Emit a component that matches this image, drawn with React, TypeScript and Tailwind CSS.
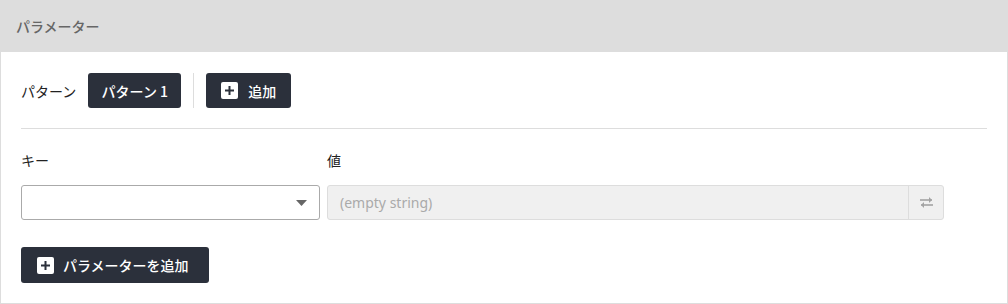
import React from 'react';

const font = { fontFamily: '"Noto Sans CJK JP", "Noto Sans", sans-serif' };

const PlusBox: React.FC = () => (
  <span className="flex h-[17px] w-[17px] items-center justify-center rounded-[2px] bg-white">
    <svg width="11" height="11" viewBox="0 0 11 11">
      <path d="M5.5 1v9M1 5.5h9" stroke="#2b303b" strokeWidth="2" />
    </svg>
  </span>
);

const SwapIcon: React.FC = () => (
  <svg width="15" height="13" viewBox="0 0 15 13" fill="none">
    <path d="M1 4h12" stroke="#a3a3a3" strokeWidth="1.6" />
    <path d="M10 1l3 3-3 3" fill="#a3a3a3" />
    <path d="M14 9H2" stroke="#a3a3a3" strokeWidth="1.6" />
    <path d="M5 6L2 9l3 3" fill="#a3a3a3" />
  </svg>
);

export default function App() {
  return (
    <div className="h-[304px] w-[1008px] bg-white text-sm text-[#222]" style={font}>
      {/* Header */}
      <div className="flex h-[52px] items-center bg-[#dddddd] px-4 text-[14px] font-medium text-[#666]">
        パラメーター
      </div>

      <div className="flex h-[252px] flex-col border-x border-b border-[#dddddd] px-5 pt-[21px]">
        {/* Pattern row */}
        <div className="flex items-center">
          <span className="mr-[12px] text-[14px] text-[#222]">パターン</span>
          <button className="flex h-[35px] w-[93px] items-center justify-center rounded-[3px] bg-[#2b303b] text-[14px] font-medium text-white">
            パターン 1
          </button>
          <div className="mx-3 h-[35px] w-px bg-[#dddddd]" />
          <button className="flex h-[35px] w-[85px] items-center justify-center gap-[10px] rounded-[3px] bg-[#2b303b] text-[14px] font-medium text-white">
            <PlusBox />
            追加
          </button>
        </div>

        <div className="mt-[20px] h-px w-[966px] bg-[#dddddd]" />

        {/* Key / value */}
        <div className="mt-[21px] flex gap-[7px]">
          <div className="flex w-[299px] flex-col">
            <span className="h-[21px] text-[14px] leading-[21px]">キー</span>
            <div className="mt-[14px] flex h-[35px] items-center justify-end rounded-[3px] border border-[#aaaaaa] bg-white pr-[12px]">
              <svg width="11" height="6" viewBox="0 0 11 6">
                <path d="M0 0h11L5.5 6z" fill="#666" />
              </svg>
            </div>
          </div>
          <div className="flex w-[617px] flex-col">
            <span className="h-[21px] text-[14px] leading-[21px]">値</span>
            <div className="mt-[14px] flex h-[35px] items-stretch rounded-[3px] border border-[#dddddd] bg-[#f0f0f0]">
              <span
                className="flex flex-1 items-center px-3 text-[14px] text-[#aaaaaa]"
                style={{ fontFamily: '"Noto Sans", "Noto Sans CJK JP", sans-serif' }}
              >
                (empty string)
              </span>
              <div className="flex w-[35px] items-center justify-center border-l border-[#dddddd]">
                <SwapIcon />
              </div>
            </div>
          </div>
        </div>

        <div className="mt-[27px]">
          <button className="flex h-[36px] w-[188px] items-center gap-[9px] rounded-[3px] bg-[#2b303b] pl-[16px] text-[14px] font-medium text-white">
            <PlusBox />
            パラメーターを追加
          </button>
        </div>
      </div>
    </div>
  );
}
